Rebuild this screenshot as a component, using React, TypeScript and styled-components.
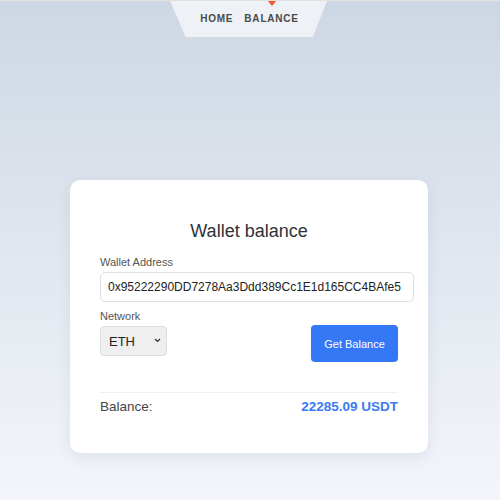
import React from "react";
import styled, { createGlobalStyle } from "styled-components";

const GlobalStyle = createGlobalStyle`
  html, body { margin: 0; padding: 0; }
  body {
    font-family: "Liberation Sans", Arial, sans-serif;
    background: linear-gradient(180deg, #cdd7e3 0%, #dfe5ee 45%, #f3f5fa 100%);
    min-height: 500px;
    border-top: 1px solid #e3e1de;
  }
`;

const Page = styled.div`
  min-height: 499px;
  display: flex;
  flex-direction: column;
  align-items: center;
`;

const NavTab = styled.nav`
  position: relative;
  width: 157px;
  height: 36px;
  margin-left: -3px;
  display: flex;
  justify-content: center;
  align-items: center;
  gap: 11px;
  padding: 0 0 1px 2px;
  box-sizing: border-box;
  &::before {
    content: "";
    position: absolute;
    inset: 0;
    background: #eef2f6;
    clip-path: polygon(0 0, 100% 0, 91% 100%, 10% 100%);
    z-index: 0;
  }
`;

const NavLink = styled.a<{ $active?: boolean }>`
  position: relative;
  z-index: 1;
  font-size: 10px;
  font-weight: 700;
  letter-spacing: 0.8px;
  color: #4a4a4a;
  text-decoration: none;
  &::before {
    content: "";
    display: ${(p) => (p.$active ? "block" : "none")};
    position: absolute;
    top: -12px;
    left: 50%;
    margin-left: -4px;
    border-left: 4px solid transparent;
    border-right: 4px solid transparent;
    border-top: 5px solid #f0562a;
  }
`;

const Card = styled.main`
  margin-top: 143px;
  margin-left: -2px;
  width: 358px;
  box-sizing: border-box;
  background: #fff;
  border-radius: 10px;
  box-shadow: 0 4px 14px rgba(90, 110, 140, 0.12);
  padding: 41px 30px 39px;
`;

const Title = styled.h2`
  margin: 0 0 14px;
  text-align: center;
  font-size: 18px;
  font-weight: 400;
  color: #2f3338;
`;

const Label = styled.label`
  display: block;
  font-size: 11px;
  color: #555;
  margin-bottom: 4px;
`;

const AddressInput = styled.input`
  display: block;
  width: 314px;
  height: 30px;
  box-sizing: border-box;
  padding: 0 7px;
  border: 1px solid #dcdfe3;
  border-radius: 5px;
  font-family: "Liberation Sans", Arial, sans-serif;
  font-size: 12px;
  color: #222;
  margin-bottom: 8px;
  outline: none;
`;

const Row = styled.div`
  display: flex;
  justify-content: space-between;
  align-items: flex-start;
`;

const Field = styled.div`
  display: flex;
  flex-direction: column;
`;

const SelectWrap = styled.div`
  position: relative;
  width: 67px;
  height: 30px;
`;

const Select = styled.select`
  appearance: none;
  -webkit-appearance: none;
  width: 100%;
  height: 100%;
  box-sizing: border-box;
  background: #efefef;
  border: 1px solid #dddddd;
  border-radius: 4px;
  font-family: "Liberation Sans", Arial, sans-serif;
  font-size: 13px;
  color: #222;
  padding: 0 4px 0 8px;
  outline: none;
`;

const Chevron = styled.svg`
  position: absolute;
  right: 6px;
  top: 12px;
  width: 7px;
  height: 5px;
  pointer-events: none;
`;

const Button = styled.button`
  margin-top: 15px;
  width: 87px;
  height: 37px;
  border: none;
  border-radius: 4px;
  background: #3478f6;
  color: #fff;
  font-family: "Liberation Sans", Arial, sans-serif;
  font-size: 11px;
  cursor: pointer;
`;

const Divider = styled.hr`
  border: none;
  border-top: 1px solid #eef0f3;
  margin: 30px 0 6px;
`;

const BalanceRow = styled.div`
  display: flex;
  justify-content: space-between;
  align-items: center;
  font-size: 13.5px;
`;

const BalanceLabel = styled.span`
  color: #444;
`;

const BalanceValue = styled.span`
  color: #3b7bf0;
  font-weight: 700;
`;

export default function App() {
  return (
    <>
      <GlobalStyle />
      <Page>
        <NavTab>
          <NavLink href="#">HOME</NavLink>
          <NavLink href="#" $active>
            BALANCE
          </NavLink>
        </NavTab>
        <Card>
          <Title>Wallet balance</Title>
          <Label>Wallet Address</Label>
          <AddressInput defaultValue="0x95222290DD7278Aa3Ddd389Cc1E1d165CC4BAfe5" />
          <Row>
            <Field>
              <Label>Network</Label>
              <SelectWrap>
                <Select defaultValue="ETH">
                  <option>ETH</option>
                  <option>BSC</option>
                  <option>TRON</option>
                </Select>
                <Chevron viewBox="0 0 7 5">
                  <path d="M1 1 L3.5 3.5 L6 1" fill="none" stroke="#333" strokeWidth="1.2" />
                </Chevron>
              </SelectWrap>
            </Field>
            <Button>Get Balance</Button>
          </Row>
          <Divider />
          <BalanceRow>
            <BalanceLabel>Balance:</BalanceLabel>
            <BalanceValue>22285.09 USDT</BalanceValue>
          </BalanceRow>
        </Card>
      </Page>
    </>
  );
}
